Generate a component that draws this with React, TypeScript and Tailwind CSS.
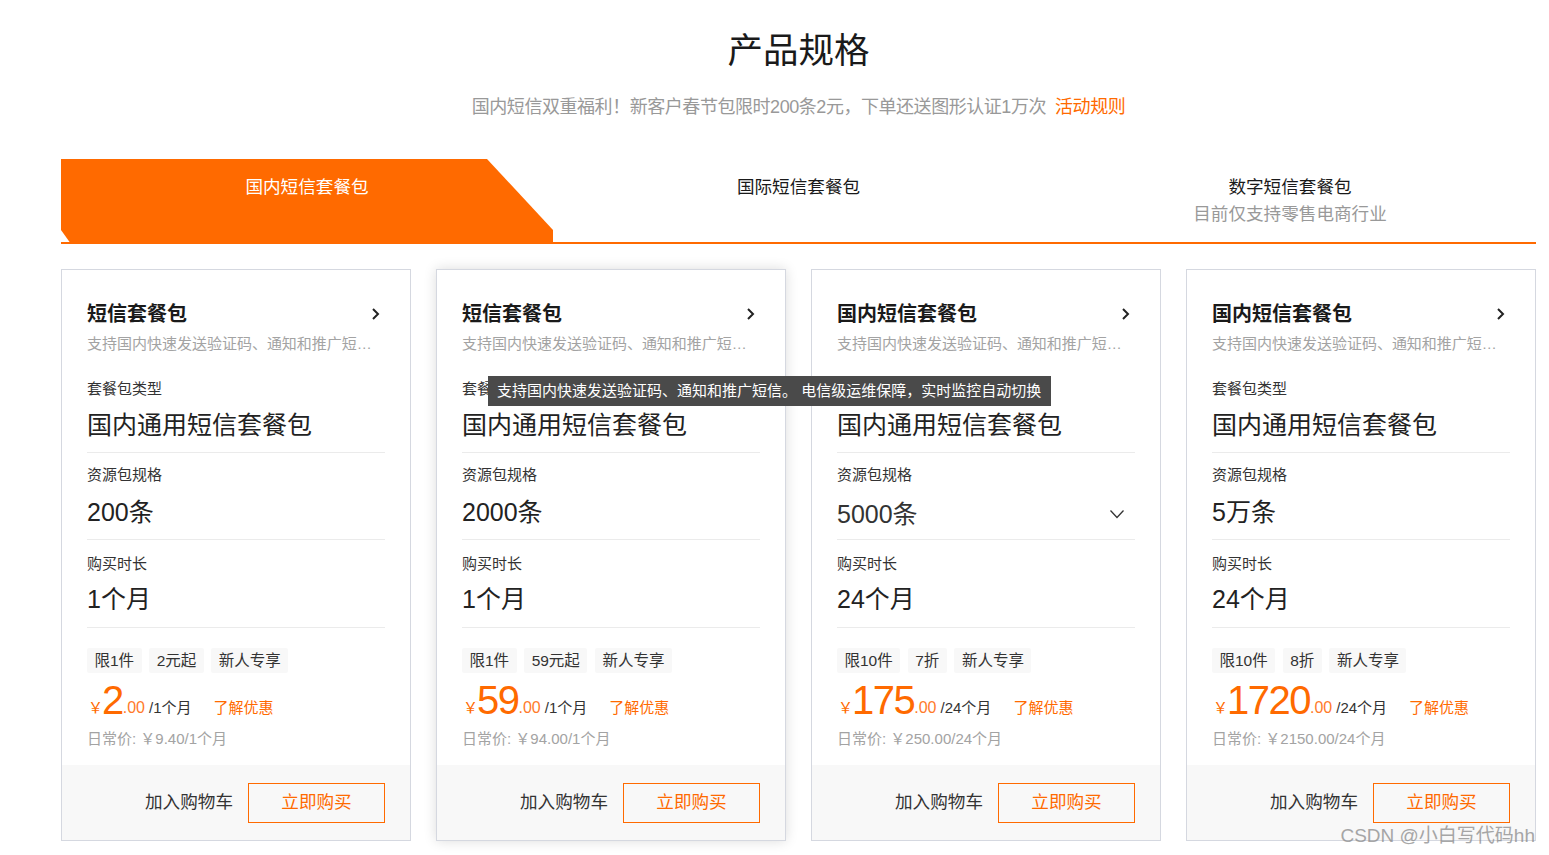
import React from "react";

const font = { fontFamily: '"Liberation Sans", "Noto Sans CJK SC", sans-serif' };

const cards = [
  { title: "短信套餐包", size: "200条", time: "1个月", tags: ["限1件", "2元起", "新人专享"], price: "2", unit: "/1个月", old: "￥9.40/1个月" },
  { title: "短信套餐包", size: "2000条", time: "1个月", tags: ["限1件", "59元起", "新人专享"], price: "59", unit: "/1个月", old: "￥94.00/1个月", hover: true },
  { title: "国内短信套餐包", size: "5000条", time: "24个月", tags: ["限10件", "7折", "新人专享"], price: "175", unit: "/24个月", old: "￥250.00/24个月", select: true },
  { title: "国内短信套餐包", size: "5万条", time: "24个月", tags: ["限10件", "8折", "新人专享"], price: "1720", unit: "/24个月", old: "￥2150.00/24个月" },
];

const Card = ({ card }: { card: (typeof cards)[number] }) => (
  <div
    className={`relative flex h-[572px] w-[350px] flex-col border border-[#d5d8e0] bg-white ${
      card.hover ? "shadow-[0_0_12px_rgba(0,0,0,0.14)]" : ""
    }`}
  >
    <div className="flex-1 px-[25px] pt-[30px]">
      <div className="flex h-[28px] items-center justify-between pr-[1px]">
        <span className="text-[20px] font-bold leading-[28px] text-[#1a1a1a]">{card.title}</span>
        <svg width="10" height="14" viewBox="0 0 10 14" fill="none" stroke="#222" strokeWidth="2" className="mr-[3px]">
          <path d="M2 2l5 5-5 5" />
        </svg>
      </div>
      <div className="mt-[6px] truncate text-[15px] leading-[20px] tracking-[-0.01px] text-[#a3a3a3]">
        支持国内快速发送验证码、通知和推广短信。电信级运维保障，实时监控自动切换
      </div>
      <div className="mt-[25px] text-[15px] leading-[20px] tracking-[-0.01px] text-[#333]">套餐包类型</div>
      <div className="h-[54px] border-b border-[#ebebeb] pt-[8px] text-[25px] leading-[36px] text-[#222]">国内通用短信套餐包</div>
      <div className="mt-[12px] text-[15px] leading-[20px] text-[#333]">资源包规格</div>
      {card.select ? (
        <div className="flex h-[55px] items-center justify-between border-b border-[#ebebeb] pt-[4px] pr-[10px] text-[25px] leading-[36px] text-[#333]">
          <span>{card.size}</span>
          <svg width="16" height="10" viewBox="0 0 16 10" fill="none" stroke="#333" strokeWidth="1.3">
            <path d="M1.5 1.5L8 8.5l6.5-7" />
          </svg>
        </div>
      ) : (
        <div className="h-[55px] border-b border-[#ebebeb] pt-[9px] text-[25px] leading-[36px] text-[#222]">{card.size}</div>
      )}
      <div className="mt-[14px] text-[15px] leading-[20px] text-[#333]">购买时长</div>
      <div className="h-[54px] border-b border-[#ebebeb] pt-[7px] text-[25px] leading-[36px] text-[#222]">{card.time}</div>
      <div className="mt-[20px] flex gap-[7.5px]">
        {card.tags.map((tag) => (
          <span key={tag} className="flex h-[25px] items-center rounded-[2px] bg-[#f8f8f8] px-[7.5px] text-[15.5px] leading-[20px] text-[#333]">
            {tag}
          </span>
        ))}
      </div>
      <div className="mt-[4px] flex h-[44px] items-end pl-[1px] text-[#ff6a00]">
        <span className="mb-[3px] text-[15px] leading-[20px]">￥</span>
        <span className="mb-[-1px] ml-[-1px] text-[40px] leading-[44px] tracking-[-1.5px]">{card.price}</span>
        <span className="mb-[3px] text-[16px] leading-[20px] text-[#ff7a2a]">.00</span>
        <span className="mb-[3px] ml-[4px] text-[15px] leading-[20px] text-[#333]">{card.unit}</span>
        <span className="mb-[3px] ml-[22px] text-[15px] leading-[20px]">了解优惠</span>
      </div>
      <div className="mt-[8px] text-[15px] leading-[20px] text-[#a3a3a3]">日常价: {card.old}</div>
    </div>
    <div className="flex h-[75px] items-center justify-end gap-[15px] bg-[#f8f8f8] px-[25px]">
      <span className="text-[17.6px] text-[#333]">加入购物车</span>
      <button className="h-[40px] w-[137px] border border-[#ff6a00] text-[17.6px] text-[#ff6a00]">立即购买</button>
    </div>
  </div>
);

const App: React.FC = () => {
  return (
    <div style={font} className="relative h-[855px] w-[1549px] overflow-hidden bg-white">
      <div className="ml-[61px] w-[1475px]">
        {/* Heading */}
        <h1 className="pt-[27px] text-center text-[35.5px] leading-[48px] font-normal text-[#1a1a1a]">产品规格</h1>
        <p className="mt-[19px] text-center text-[18px] leading-[26px] tracking-[-0.45px] text-[#999]">
          国内短信双重福利！新客户春节包限时200条2元，下单还送图形认证1万次
          <span className="ml-[9px] text-[#ff6a00]">活动规则</span>
        </p>

        {/* Tabs */}
        <div className="mt-[39px] flex h-[85px] border-b-2 border-[#ff6a00]">
          <div className="h-[85px] w-[492px] bg-[#ff6a00] pt-[16px] text-center text-[17.6px] leading-[24px] text-white [clip-path:polygon(0_0,426px_0,492px_71px,492px_100%,10px_100%,0_71px)]">
            国内短信套餐包
          </div>
          <div className="w-[491px] pt-[16px] text-center text-[17.6px] leading-[24px] text-[#1a1a1a]">国际短信套餐包</div>
          <div className="w-[492px] pt-[16px] text-center text-[17.6px] leading-[24px] text-[#1a1a1a]">
            数字短信套餐包
            <div className="mt-[3px] text-[17.6px] text-[#999]">目前仅支持零售电商行业</div>
          </div>
        </div>

        {/* Cards */}
        <div className="mt-[25px] flex gap-[25px]">
          {cards.map((card, index) => (
            <Card key={index} card={card} />
          ))}
        </div>
      </div>

      {/* Tooltip */}
      <div className="absolute top-[376px] left-[488px] flex h-[30px] w-[563px] items-center bg-[#4a4a4a] pl-[9px] text-[15px] whitespace-pre text-white">
        支持国内快速发送验证码、通知和推广短信。 电信级运维保障，实时监控自动切换
      </div>

      {/* Watermark */}
      <div className="absolute top-[824px] right-[14px] text-[19px] leading-[24px] text-[#8a8a8a] opacity-75">CSDN @小白写代码hh</div>
    </div>
  );
};

export default App;
